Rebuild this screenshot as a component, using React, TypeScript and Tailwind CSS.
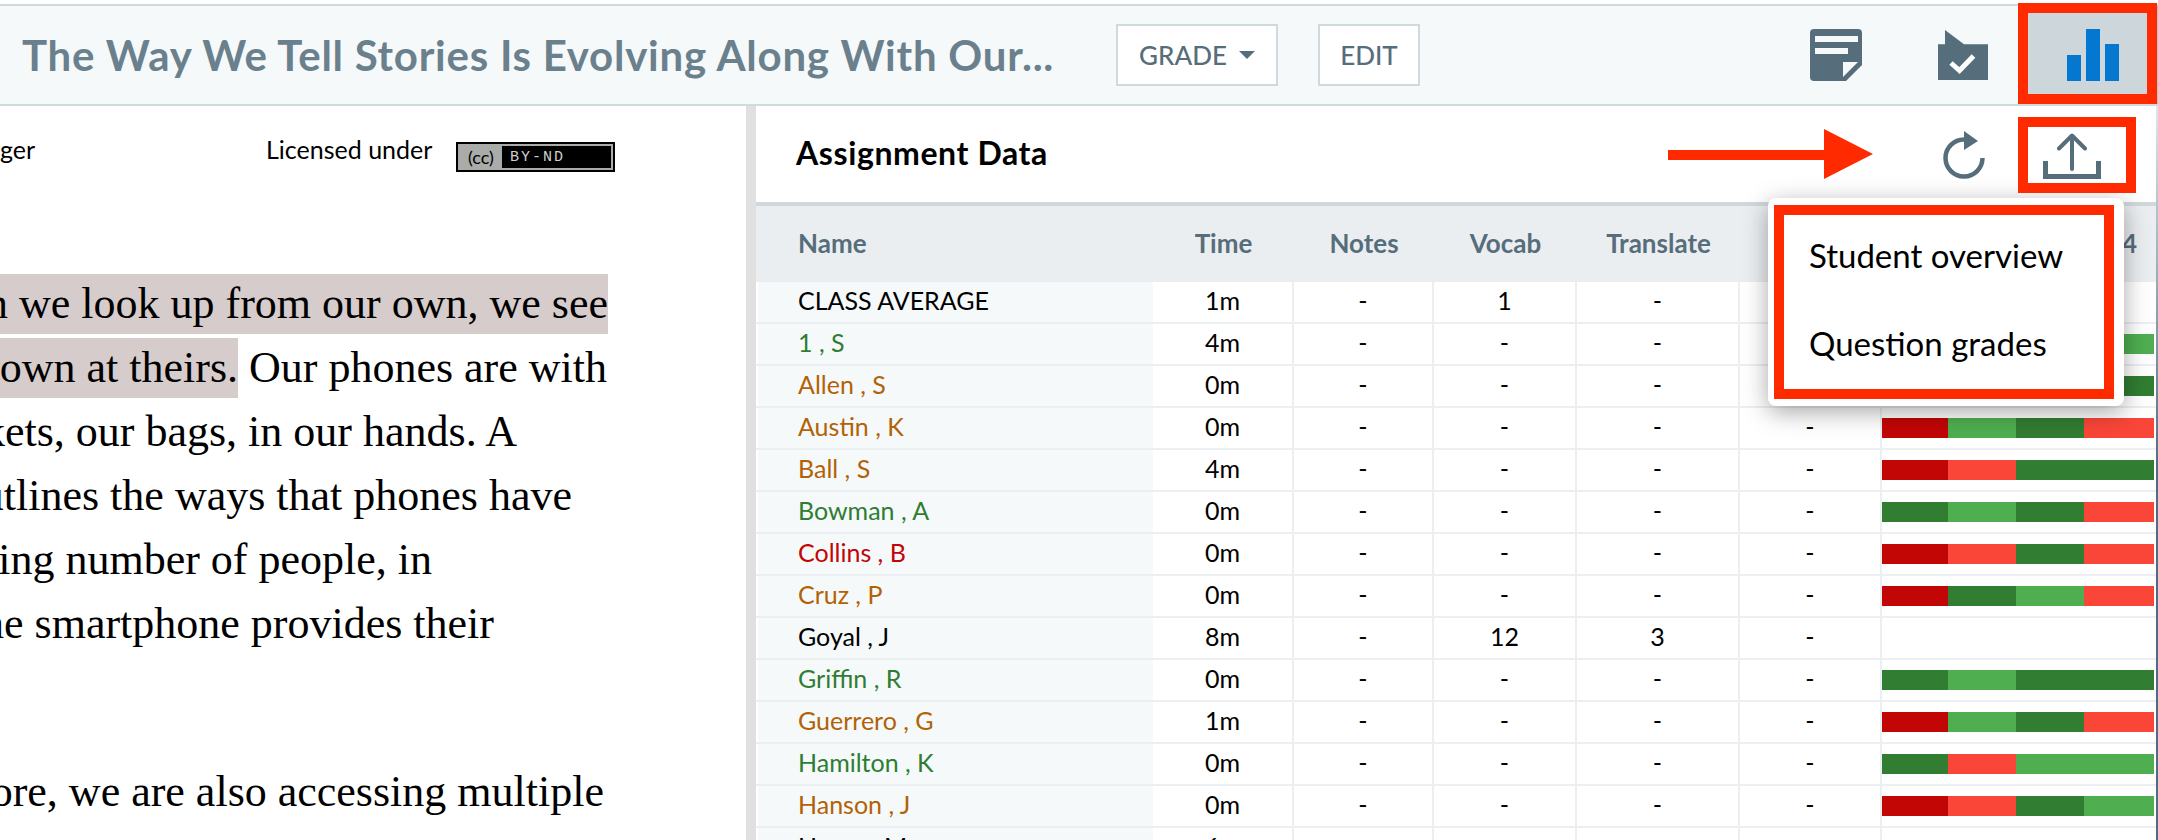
const D = "bg-[#317d32]";
const L = "bg-[#4fae50]";
const R = "bg-[#c20505]";
const O = "bg-[#f94638]";

const GREEN = "text-[#2e7d32]";
const ORANGE = "text-[#b26205]";
const RED = "text-[#c20505]";
const BLACK = "text-black";

// name, name colour, time, notes, vocab, translate, bars
const students: [string, string, string, string, string, string, string[]][] = [
  ["CLASS AVERAGE", BLACK, "1m", "-", "1", "-", []],
  ["1 , S", GREEN, "4m", "-", "-", "-", [D, L, D, L]],
  ["Allen , S", ORANGE, "0m", "-", "-", "-", [R, L, O, D]],
  ["Austin , K", ORANGE, "0m", "-", "-", "-", [R, L, D, O]],
  ["Ball , S", ORANGE, "4m", "-", "-", "-", [R, O, D, D]],
  ["Bowman , A", GREEN, "0m", "-", "-", "-", [D, L, D, O]],
  ["Collins , B", RED, "0m", "-", "-", "-", [R, O, D, O]],
  ["Cruz , P", ORANGE, "0m", "-", "-", "-", [R, D, L, O]],
  ["Goyal , J", BLACK, "8m", "-", "12", "3", []],
  ["Griffin , R", GREEN, "0m", "-", "-", "-", [D, L, D, D]],
  ["Guerrero , G", ORANGE, "1m", "-", "-", "-", [R, L, D, O]],
  ["Hamilton , K", GREEN, "0m", "-", "-", "-", [D, O, L, L]],
  ["Hanson , J", ORANGE, "0m", "-", "-", "-", [R, O, D, L]],
  ["Hayes , M", BLACK, "6m", "-", "-", "-", []],
];

const gridCols = "grid grid-cols-[395px_141px_140px_143px_163px_142px_272px]";

function NotesIcon() {
  return (
    <svg width="52" height="52" viewBox="0 0 52 52">
      <path d="M4 0H48a4 4 0 0 1 4 4V36L36 52H4a4 4 0 0 1-4-4V4a4 4 0 0 1 4-4z" fill="#566d7b" />
      <rect x="5" y="7" width="43" height="6" fill="#f5f9fa" />
      <rect x="5" y="19" width="33" height="6" fill="#f5f9fa" />
      <path d="M33 33H48L33 48z" fill="#f5f9fa" />
    </svg>
  );
}

function CheckIcon() {
  return (
    <svg width="50" height="50" viewBox="0 0 50 50">
      <path d="M0 14.3H7V0L26 14.3H50V50H0z" fill="#566d7b" />
      <path d="M13 33L21.5 40.5L35.5 26" fill="none" stroke="#fff" strokeWidth="5" />
    </svg>
  );
}

function ChartIcon() {
  return (
    <svg width="52" height="52" viewBox="0 0 52 52" fill="#0477d0">
      <rect x="0" y="26" width="14" height="26" />
      <rect x="19" y="0" width="14" height="52" />
      <rect x="38" y="15" width="14" height="37" />
    </svg>
  );
}

function RefreshIcon() {
  return (
    <svg width="44" height="50" viewBox="0 0 44 50">
      <path d="M40.5 27A18.5 18.5 0 1 1 22 8.5" fill="none" stroke="#566d7b" strokeWidth="4.5" />
      <path d="M22 0L36 10L22 19z" fill="#566d7b" />
    </svg>
  );
}

function UploadIcon() {
  return (
    <svg width="58" height="46" viewBox="0 0 58 46" fill="none" stroke="#566d7b">
      <path d="M2.5 28V43.5H55.5V28" strokeWidth="5" />
      <path d="M29 3V36M16 15.5L29 2.5L42 15.5" strokeWidth="4" strokeLinecap="round" strokeLinejoin="round" />
    </svg>
  );
}

function CcBadge() {
  return (
    <div className="mt-[14px] flex h-[30px] w-[159px] bg-black p-[2px]">
      <div className="flex flex-1 border-2 border-[#a9aca8]">
        <div className="flex w-[42px] items-center justify-center bg-[#a9aca8] text-[18px] leading-none text-black">
          (cc)
        </div>
        <div className="flex flex-1 items-center pl-2 font-['Liberation_Mono',monospace] text-[15px] leading-none tracking-[2px] text-[#cfcfcf]">
          BY-ND
        </div>
      </div>
    </div>
  );
}

function Reading() {
  const line = "flex h-[64px] justify-end whitespace-nowrap";
  return (
    <div className="font-['Liberation_Serif',serif] text-[44px] leading-[60px] text-black">
      <div className={`${line} w-[608px]`}>
        <span className="h-[60px] flex-1 bg-[#d6cccb] text-right">
          <span className="float-right">When we look up from our own, we see</span>
        </span>
      </div>
      <div className={`${line} w-[607px]`}>
        <span className="h-[60px] w-[238px] shrink-0 bg-[#d6cccb]">
          <span className="float-right">looking down at theirs.</span>
        </span>
        <span className="flex-1 text-right">Our phones are with</span>
      </div>
      <div className={`${line} w-[517px]`}>
        <span className="shrink-0">pockets, our bags, in our hands. A</span>
      </div>
      <div className={`${line} w-[572px]`}>
        <span className="shrink-0">outlines the ways that phones have</span>
      </div>
      <div className={`${line} w-[432px]`}>
        <span className="shrink-0">growing number of people, in</span>
      </div>
      <div className={`${line} w-[494px]`}>
        <span className="shrink-0">the smartphone provides their</span>
      </div>
      <div className={`${line} mt-[104px] w-[604px]`}>
        <span className="shrink-0">Furthermore, we are also accessing multiple</span>
      </div>
    </div>
  );
}

export default function App() {
  return (
    <div className="relative h-[840px] w-[2158px] overflow-hidden bg-white font-[Lato,sans-serif]">
      {/* top bar */}
      <div className="mt-1 flex h-[102px] items-stretch border-y-2 border-[#d0dadd] bg-[#f5f9fa]">
        <h1 className="w-[1116px] self-center whitespace-nowrap pl-[22px] text-[42px] font-bold leading-none tracking-[0.75px] text-[#6a808d]">
          The Way We Tell Stories Is Evolving Along With Our...
        </h1>
        <button className="flex h-[62px] w-[162px] items-center justify-center gap-3 self-center border-2 border-[#cfdadf] bg-white text-[26px] font-medium text-[#566d7b]">
          GRADE
          <span className="h-0 w-0 border-x-8 border-t-8 border-x-transparent border-t-[#566d7b]" />
        </button>
        <button className="ml-10 flex h-[62px] w-[102px] items-center justify-center self-center border-2 border-[#cfdadf] bg-white text-[26px] font-medium text-[#566d7b]">
          EDIT
        </button>
        <div className="ml-auto flex items-stretch">
          <div className="flex w-[128px] items-center">
            <NotesIcon />
          </div>
          <div className="flex w-[81px] items-center">
            <CheckIcon />
          </div>
          <div className="flex w-[139px] items-center justify-center bg-[#cdd6da] pl-[9px] shadow-[inset_0_0_6px_rgba(86,109,123,0.35)]">
            <ChartIcon />
          </div>
        </div>
      </div>

      <div className="flex h-[734px]">
        {/* reading pane */}
        <div className="w-[746px] shrink-0 overflow-hidden">
          <div className="mb-[80px] flex h-[88px] items-center text-[25px] text-black">
            <span className="w-[266px]">ger</span>
            <span className="w-[190px]">Licensed under</span>
            <CcBadge />
          </div>
          <Reading />
        </div>
        <div className="w-[10px] shrink-0 bg-[#e0e0e0]" />

        {/* assignment data */}
        <div className="flex-1">
          <div className="flex h-[100px] items-center border-b-4 border-[#d0d8dc] pl-[40px]">
            <h2 className="mb-[2px] text-[32px] font-bold tracking-[0.6px] text-black">Assignment Data</h2>
            <div className="ml-auto mt-[3px] flex items-center gap-[57px] pr-[57px]">
              <RefreshIcon />
              <UploadIcon />
            </div>
          </div>
          <div className={`${gridCols} h-[76px] items-center bg-[#ebeef1] pb-[2px] pl-[2px] text-[26px] font-bold text-[#566d7b]`}>
            <div className="pl-[40px]">Name</div>
            <div className="text-center">Time</div>
            <div className="text-center">Notes</div>
            <div className="text-center">Vocab</div>
            <div className="text-center">Translate</div>
            <div />
            <div className="pr-[17px] text-right">4</div>
          </div>
          {students.map(([name, color, time, notes, vocab, translate, bars]) => (
            <div key={name} className={`${gridCols} h-[42px] border-b-2 border-[#ebeff2] pl-[2px] text-[25px] leading-[36px] text-black`}>
              <div className={`bg-[#f5f9fa] pl-[40px] ${color}`}>{name}</div>
              <div className="border-r-2 border-[#ebeff2] text-center">{time}</div>
              <div className="border-r-2 border-[#ebeff2] text-center">{notes}</div>
              <div className="border-r-2 border-[#ebeff2] text-center">{vocab}</div>
              <div className="border-r-2 border-[#ebeff2] text-center">{translate}</div>
              <div className="border-r-2 border-[#ebeff2] text-center">-</div>
              <div className="grid h-[40px] grid-cols-[66px_68px_68px_70px] items-center">
                {bars.map((bar, i) => (
                  <div key={i} className={`h-[20px] ${bar}`} />
                ))}
              </div>
            </div>
          ))}
        </div>
      </div>

      {/* sliver of the desktop behind the window */}
      <div className="absolute bottom-0 right-0 top-[106px] w-[2px] bg-gradient-to-b from-[#e2e6e8] via-[#4f6c84] to-[#4f6c84]" />

      {/* export menu */}
      <div className="absolute left-[1768px] top-[198px] flex h-[208px] w-[356px] flex-col rounded-lg bg-white p-[7px_10px_7px_6px] text-[33px] leading-none text-black shadow-[0_6px_24px_rgba(0,0,0,0.35)]">
        <div className="flex h-[194px] flex-col justify-center gap-[55px] border-[10px] border-[#ff2a00] pb-[6px] pl-[25px]">
          <div>Student overview</div>
          <div>Question grades</div>
        </div>
      </div>

      {/* red annotations */}
      <div className="absolute left-[2018px] top-[3px] h-[101px] w-[139px] border-[10px] border-[#ff2a00]" />
      <div className="absolute left-[2018px] top-[117px] h-[76px] w-[118px] border-[10px] border-[#ff2a00]" />
      <svg className="absolute left-[1668px] top-[129px]" width="205" height="50" viewBox="0 0 205 50">
        <path d="M0 21H156V0L205 25L156 50V31H0z" fill="#ff2a00" />
      </svg>
    </div>
  );
}
